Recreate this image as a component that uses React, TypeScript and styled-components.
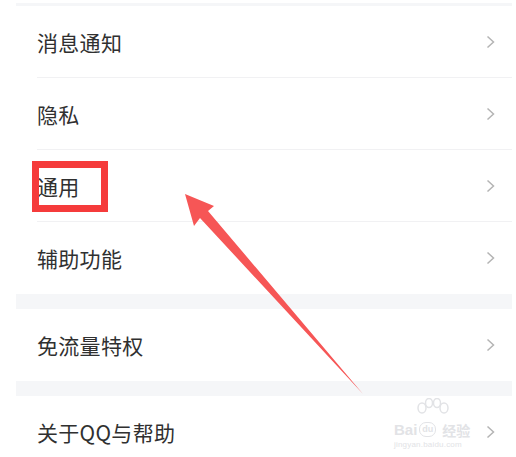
import React from "react";
import styled, { createGlobalStyle } from "styled-components";

const Global = createGlobalStyle`
  html, body { margin: 0; padding: 0; background: #ffffff; }
  #root { width: 516px; height: 457px; }
`;

const Screen = styled.div`
  position: relative;
  width: 516px;
  height: 457px;
  overflow: hidden;
  background: #ffffff;
  padding-top: 3px;
  box-sizing: border-box;
  font-family: "Noto Sans CJK SC", "Noto Sans", sans-serif;
`;

const Panel = styled.div`
  margin-left: 16px;
  width: 496px;
  display: flex;
  flex-direction: column;
  background: #f5f6f8;
`;

const Gap = styled.div<{ $h: number }>`
  height: ${(p) => p.$h}px;
  background: #f5f6f8;
`;

const Group = styled.div`
  display: flex;
  flex-direction: column;
  background: #ffffff;
`;

const Row = styled.div`
  padding-left: 21px;
  background: #ffffff;
`;

const RowInner = styled.div<{ $divider: boolean }>`
  height: 71px;
  display: flex;
  align-items: center;
  justify-content: space-between;
  padding-right: 17px;
  border-bottom: ${(p) => (p.$divider ? "1px solid #f1f1f3" : "1px solid transparent")};
`;

const Label = styled.span`
  font-size: 21px;
  color: #303030;
  letter-spacing: 0.3px;
  line-height: 1;
  padding-top: 2px;
`;

const Chevron = () => (
  <svg width="9" height="14" viewBox="0 0 9 14">
    <polyline points="1.5,1.5 7.5,7 1.5,12.5" fill="none" stroke="#b4b4b4" strokeWidth="1.5" />
  </svg>
);

const HighlightBox = styled.div`
  position: absolute;
  left: 32px;
  top: 161px;
  width: 76px;
  height: 51px;
  border: 7px solid #f53b3b;
  box-sizing: border-box;
`;

const Overlay = styled.svg`
  position: absolute;
  left: 0;
  top: 0;
  pointer-events: none;
`;

const Watermark = styled.div`
  position: absolute;
  left: 394px;
  top: 398px;
  width: 100px;
  height: 54px;
  color: #e2e3e6;
  font-family: "Liberation Sans", Arial, sans-serif;
`;

const WmLine = styled.div`
  display: flex;
  align-items: center;
  gap: 2px;
  margin-top: 24px;
  font-size: 15px;
  font-weight: 700;
  line-height: 1;
`;

const WmDu = styled.span`
  display: inline-flex;
  align-items: center;
  justify-content: center;
  width: 15px;
  height: 13px;
  border: 1.5px solid #e2e3e6;
  border-radius: 7px;
  font-size: 9px;
`;

const WmCn = styled.span`
  font-family: "Noto Sans CJK SC", sans-serif;
  font-size: 14px;
  margin-left: 4px;
`;

const WmUrl = styled.div`
  font-size: 8px;
  margin-top: 3px;
  letter-spacing: 0.2px;
`;

type Item = { label: string };

const groups: Item[][] = [
  [{ label: "消息通知" }, { label: "隐私" }, { label: "通用" }, { label: "辅助功能" }],
  [{ label: "免流量特权" }],
  [{ label: "关于QQ与帮助" }],
];

export default function App() {
  return (
    <>
      <Global />
      <Screen>
        <Panel>
          <Gap $h={3} />
          {groups.map((g, gi) => (
            <React.Fragment key={gi}>
              {gi > 0 && <Gap $h={15} />}
              <Group>
                {g.map((it, i) => (
                  <Row key={it.label}>
                    <RowInner $divider={i < g.length - 1}>
                      <Label>{it.label}</Label>
                      <Chevron />
                    </RowInner>
                  </Row>
                ))}
              </Group>
            </React.Fragment>
          ))}
        </Panel>
        <HighlightBox />
        <Watermark>
          <svg width="40" height="24" viewBox="0 0 40 24" style={{ position: "absolute", left: 18, top: 0 }}>
            <g fill="none" stroke="#e2e3e6" strokeWidth="1.5">
              <ellipse cx="10" cy="10" rx="4" ry="5" />
              <ellipse cx="17" cy="5" rx="3.5" ry="4.5" />
              <ellipse cx="25" cy="5" rx="3.5" ry="4.5" />
              <ellipse cx="32" cy="10" rx="4" ry="5" />
            </g>
          </svg>
          <WmLine>
            <span>Bai</span>
            <WmDu>du</WmDu>
            <WmCn>经验</WmCn>
          </WmLine>
          <WmUrl>jingyan.baidu.com</WmUrl>
        </Watermark>
        <Overlay width="516" height="457" viewBox="0 0 516 457">
          <polygon
            points="185,194 214,206 208,211 363,394 200,218 194,226"
            fill="#f65656"
          />
        </Overlay>
      </Screen>
    </>
  );
}
